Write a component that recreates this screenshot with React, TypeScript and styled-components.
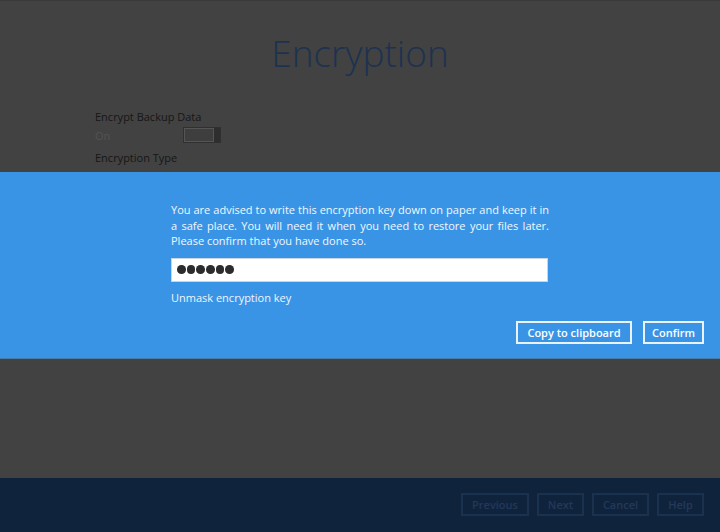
import React from "react";
import styled, { createGlobalStyle } from "styled-components";

const Global = createGlobalStyle`
  html, body {
    margin: 0;
    padding: 0;
    background: #424242;
  }
  body {
    font-family: "Open Sans", "Noto Sans", sans-serif;
  }
`;

const Screen = styled.div`
  width: 720px;
  height: 532px;
  display: flex;
  flex-direction: column;
  background: #424242;
  overflow: hidden;
`;

const Top = styled.div`
  height: 172px;
  flex: 0 0 auto;
  border-top: 1px solid #3a3a3a;
  box-sizing: border-box;
  overflow: hidden;
`;

const Title = styled.h1`
  margin: 0;
  padding-top: 30px;
  text-align: center;
  font-size: 37px;
  font-weight: 300;
  color: #1c3250;
  line-height: 44px;
`;

const Settings = styled.div`
  padding: 35px 0 0 95px;
  display: flex;
  flex-direction: column;
`;

const SettingLabel = styled.div`
  font-size: 11px;
  line-height: 14px;
  color: #161616;
`;

const ToggleRow = styled.div`
  display: flex;
  align-items: center;
  height: 20px;
  margin: 1px 0 6px;
`;

const ToggleText = styled.span`
  width: 88px;
  font-size: 11px;
  color: #525252;
`;

const Toggle = styled.div`
  width: 38px;
  height: 16px;
  box-sizing: border-box;
  border: 1px solid #303030;
  background: #2e2e2e;
  display: flex;
  justify-content: flex-start;
  align-items: stretch;
`;

const ToggleKnob = styled.div`
  width: 28px;
  border: 1px solid #555;
  background: #3e3e3e;
`;

const Band = styled.div`
  height: 187px;
  flex: 0 0 auto;
  background: #3a94e6;
  box-sizing: border-box;
  border-bottom: 1px solid #4a7aa6;
  padding: 30px 16px 0 171px;
  display: flex;
  flex-direction: column;
`;

const Message = styled.p`
  margin: 0;
  width: 378px;
  font-size: 11px;
  line-height: 15.5px;
  color: #f2f7fd;
  text-align: justify;
`;

const KeyField = styled.div`
  margin-top: 9px;
  width: 377px;
  height: 24px;
  box-sizing: border-box;
  background: #fff;
  border: 1px solid #c9d6e2;
  display: flex;
  align-items: center;
  padding-left: 5px;
  gap: 1px;
`;

const Dot = styled.span`
  width: 8.7px;
  height: 8.7px;
  border-radius: 50%;
  background: #2c2c2c;
`;

const UnmaskLink = styled.div`
  margin-top: 9px;
  font-size: 11px;
  line-height: 14px;
  color: #eef5fd;
`;

const BandActions = styled.div`
  margin-top: 16px;
  display: flex;
  justify-content: flex-end;
  gap: 11px;
`;

const LightButton = styled.button<{ $w: number }>`
  height: 23px;
  width: ${(p) => p.$w}px;
  box-sizing: border-box;
  padding: 0;
  border: 2px solid #eaf3fc;
  background: transparent;
  color: #ffffff;
  font-family: "Open Sans", sans-serif;
  font-size: 11px;
  font-weight: 600;
`;

const Middle = styled.div`
  flex: 1 1 auto;
`;

const Footer = styled.div`
  height: 54px;
  flex: 0 0 auto;
  background: #10233d;
  display: flex;
  justify-content: flex-end;
  align-items: flex-start;
  padding: 15px 16px 0 0;
  box-sizing: border-box;
  gap: 8px;
`;

const DimButton = styled.button<{ $w: number }>`
  height: 23px;
  box-sizing: border-box;
  width: ${(p) => p.$w}px;
  border: 2px solid #1b324f;
  background: transparent;
  color: #22395a;
  font-family: "Open Sans", sans-serif;
  font-size: 11px;
  font-weight: 600;
  padding: 0;
`;

export default function App() {
  return (
    <Screen>
      <Global />
      <Top>
        <Title>Encryption</Title>
        <Settings>
          <SettingLabel>Encrypt Backup Data</SettingLabel>
          <ToggleRow>
            <ToggleText>On</ToggleText>
            <Toggle>
              <ToggleKnob />
            </Toggle>
          </ToggleRow>
          <SettingLabel>Encryption Type</SettingLabel>
        </Settings>
      </Top>
      <Band>
        <Message>
          You are advised to write this encryption key down on paper and keep it in a safe
          place. You will need it when you need to restore your files later. Please confirm
          that you have done so.
        </Message>
        <KeyField>
          {Array.from({ length: 6 }).map((_, i) => (
            <Dot key={i} />
          ))}
        </KeyField>
        <UnmaskLink>Unmask encryption key</UnmaskLink>
        <BandActions>
          <LightButton $w={116}>Copy to clipboard</LightButton>
          <LightButton $w={61}>Confirm</LightButton>
        </BandActions>
      </Band>
      <Middle />
      <Footer>
        <DimButton $w={68}>Previous</DimButton>
        <DimButton $w={47}>Next</DimButton>
        <DimButton $w={57}>Cancel</DimButton>
        <DimButton $w={47}>Help</DimButton>
      </Footer>
    </Screen>
  );
}
